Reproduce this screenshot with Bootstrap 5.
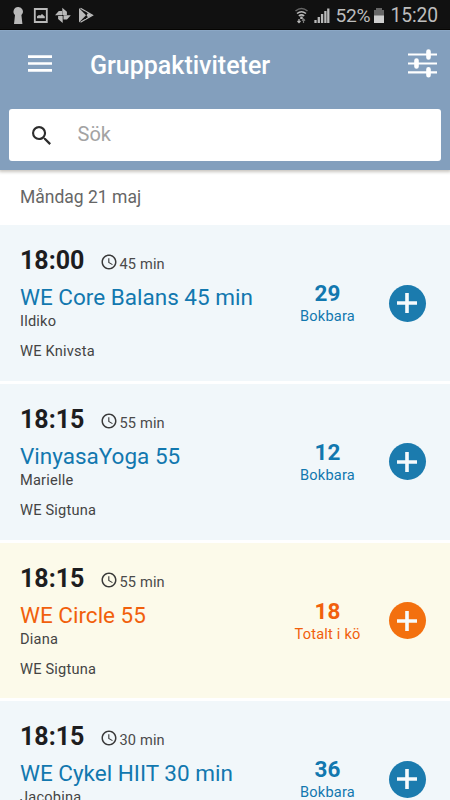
<!DOCTYPE html>
<html lang="sv">
<head>
<meta charset="utf-8">
<meta name="viewport" content="width=device-width, initial-scale=1">
<title>Gruppaktiviteter</title>
<link href="https://cdn.jsdelivr.net/npm/bootstrap@5.3.0/dist/css/bootstrap.min.css" rel="stylesheet">
<style>
html, body { height: 100%; }
body { font-family: Roboto, sans-serif; font-size: 14.6px; line-height: 20px; color: #444; background: #fff; }
svg { display: block; flex: none; }
.screen { width: 100%; height: 800px; }
.statusbar { height: 30px; background: #111; color: #bdbdbd; padding: 3px 12px 0 12px; font-size: 19.3px; border-bottom: 1px solid #000; }
.statusbar .pct { font-size: 19.2px; margin-left: 5px; letter-spacing: -.2px; }
.statusbar .cell { margin-left: 3px; }
.statusbar .clock { margin-left: 5px; letter-spacing: -.1px; }
.statusbar svg { margin-top: -2px; }
.appbar { height: 140px; background: #839fbd; border-top: 1px solid #8ba7c5; box-shadow: 0 1px 3px 1px rgba(60,50,30,.28); z-index: 1; }
.toolbar { height: 78px; padding: 0 13px 8px 28px; }
.toolbar svg { margin-bottom: 6px; }
.toolbar h1 { font-size: 25px; line-height: 30px; margin-left: 38px; letter-spacing: 0; }
.searchbox { height: 52px; margin: 0 9px; padding-left: 23px; border-radius: 3px; }
.searchbox input { font-size: 20px; margin: 0 0 2px 18.5px; color: #333; }
.searchbox input::placeholder { color: #a3a3a3; opacity: 1; }
.day { height: 55px; padding: 17px 20px 0; font-size: 17.5px; color: #666; }
.activity { height: 155.8px; margin-bottom: 3px; padding: 21px 24.5px 0 20px; background: #f1f7fa; --tone: #1278af; --fill: #1b7bae; }
.activity.queue { background: #fcfaea; --tone: #f1600c; --fill: #f3700f; }
.activity .time { font-size: 25px; line-height: 30px; font-weight: 700; color: #1d1d1f; letter-spacing: 0; width: 79.5px; }
.activity .mins { padding-top: 8px; margin-left: 2px; color: #4a4a4a; letter-spacing: .15px; }
.activity .clockface { margin-top: 7px; }
.activity h2 { font-size: 22.5px; line-height: 29px; font-weight: 400; color: var(--tone); margin: 7px 0 -1px; }
.activity .person, .activity .place { letter-spacing: .2px; }
.activity .place { margin-top: 10px; }
.activity .spots { width: 90px; padding-top: 33px; color: var(--tone); margin-right: 16px; letter-spacing: .2px; }
.activity .count { font-size: 22.5px; line-height: 28px; font-weight: 700; letter-spacing: 0; margin-bottom: -1px; }
.activity .add { width: 37px; height: 37px; margin-top: 38.6px; background: var(--fill); }
</style>
<script src="https://cdn.jsdelivr.net/npm/bootstrap@5.3.0/dist/js/bootstrap.bundle.min.js"></script>
</head>
<body>
<svg width="0" height="0" class="position-absolute">
  <symbol id="clock" viewBox="0 0 24 24"><path d="M11.99 2C6.47 2 2 6.48 2 12s4.47 10 9.99 10C17.52 22 22 17.52 22 12S17.52 2 11.99 2zM12 20c-4.42 0-8-3.58-8-8s3.58-8 8-8 8 3.58 8 8-3.58 8-8 8zm.5-13H11v6l5.25 3.15.75-1.23-4.5-2.67z" fill="#3a3a3a"/></symbol>
  <symbol id="plus" viewBox="0 0 20 20"><path d="M10 0v20M0 10h20" stroke="#f6fafc" stroke-width="3.6"/></symbol>
</svg>
<div class="screen overflow-hidden d-flex flex-column">
  <div class="statusbar d-flex align-items-center justify-content-between flex-shrink-0">
    <div class="d-flex align-items-center">
      <svg width="84" height="30" viewBox="12 0 84 30" fill="#b9b9b9">
        <path d="M18 7a4.6 4.6 0 0 0-3 8l-1 9h8.4l-1-9A4.6 4.6 0 0 0 18 7z"/>
        <path d="M34.8 9h12v13h-12z" fill="none" stroke="#b9b9b9" stroke-width="1.8"/>
        <path d="M37 18.300v-2l2-1.300 1.300.5 1.700-1.500 2.800 2.500v1.800z"/>
        <path d="M62.300 15V7.800l4.600 4V15zM63.500 15.300h7.300l-3.800 4.200h-3.500zM62.700 16v7l-4.600-4v-3zM62 15.200h-7l3.800-4.200H62z"/>
        <path d="M79 8v14.500l7-7.200z"/><path d="M80.500 8.200l12 7-12 7" fill="none" stroke="#b9b9b9" stroke-width="1.3"/><path d="M85 11.500l3.500 3.800-3.500 3.700" fill="none" stroke="#111" stroke-width="1"/><path d="M88 13l4.500 2.200L88 17.500l-1.500-2.200z"/>
      </svg>
    </div>
    <div class="d-flex align-items-center">
      <svg width="36" height="30" viewBox="295 0 36 30" fill="none" stroke="#b9b9b9">
        <path d="M296.500 11q6-5 12 0" stroke="#666" stroke-width="1.6"/><path d="M298 13.500q4.500-3.600 9 0M299.800 16q2.700-2.200 5.400 0" stroke-width="1.6"/>
        <path d="M302.500 16.500v2.500" stroke-width="2.5"/><path d="M300 19v3.500m-1.500-1.500l1.500 1.700 1.500-1.700" stroke-width="1.2"/><path d="M304.500 23v-4m-1.500 1.700l1.500-1.700 1.500 1.700" stroke="#777" stroke-width="1.2"/>
        <path d="M316.500 23v-3M319.800 23v-6M323.100 23v-9M326.400 23V11M329.300 23V8.500" stroke-width="2.3"/>
      </svg>
      <span class="pct">52%</span>
      <svg width="12" height="30" viewBox="0 0 12 30" class="cell"><path d="M3 8h6v2h2v6H1v-6h2z" fill="#666"/><path d="M1 15.500h10V23H1z" fill="#cecece"/></svg>
      <span class="clock">15:20</span>
    </div>
  </div>

  <header class="appbar position-relative flex-shrink-0">
    <div class="toolbar d-flex align-items-center text-white">
      <svg width="24" height="17" viewBox="0 0 24 17" stroke="#fff" stroke-width="2.7"><path d="M0 1.700h24M0 8.500h24M0 15.300h24"/></svg>
      <h1 class="mb-0 fw-medium">Gruppaktiviteter</h1>
      <svg class="ms-auto" width="29" height="29" viewBox="0 0 29 29" fill="none" stroke="#fff"><path d="M0 5.500h29M0 14.500h29M0 23.300h29" stroke-width="2.2"/><path d="M20.500 2.500v6M8.500 11.500v6M20.500 20.300v6" stroke-width="4.6" stroke-linecap="round"/></svg>
    </div>
    <div class="searchbox bg-white d-flex align-items-center">
      <svg width="19" height="19" viewBox="3 3 17.5 17.5" fill="#2d2d2d"><path d="M15.500 14h-.79l-.28-.27A6.471 6.471 0 0 0 16 9.500 6.500 6.500 0 1 0 9.500 16c1.610 0 3.090-.59 4.230-1.570l.27.28v.79l5 4.990L20.490 19l-4.990-5zm-6 0C7.010 14 5 11.990 5 9.500S7.010 5 9.500 5 14 7.010 14 9.500 11.990 14 9.500 14z"/></svg>
      <input type="text" class="form-control border-0 shadow-none bg-transparent px-2 py-0" placeholder="Sök" aria-label="Sök">
    </div>
  </header>

  <main>
    <div class="day">Måndag 21 maj</div>

    <article class="activity d-flex">
      <div class="flex-grow-1">
        <div class="d-flex"><span class="time">18:00</span><svg class="clockface" width="18" height="18"><use href="#clock"/></svg><span class="mins">45 min</span></div>
        <h2>WE Core Balans 45 min</h2>
        <div class="person">Ildiko</div>
        <div class="place">WE Knivsta</div>
      </div>
      <div class="spots text-center"><div class="count">29</div><div>Bokbara</div></div>
      <button class="add btn rounded-circle border-0 p-0 d-flex align-items-center justify-content-center" aria-label="Boka"><svg width="20" height="20"><use href="#plus"/></svg></button>
    </article>

    <article class="activity d-flex">
      <div class="flex-grow-1">
        <div class="d-flex"><span class="time">18:15</span><svg class="clockface" width="18" height="18"><use href="#clock"/></svg><span class="mins">55 min</span></div>
        <h2>VinyasaYoga 55</h2>
        <div class="person">Marielle</div>
        <div class="place">WE Sigtuna</div>
      </div>
      <div class="spots text-center"><div class="count">12</div><div>Bokbara</div></div>
      <button class="add btn rounded-circle border-0 p-0 d-flex align-items-center justify-content-center" aria-label="Boka"><svg width="20" height="20"><use href="#plus"/></svg></button>
    </article>

    <article class="activity queue d-flex">
      <div class="flex-grow-1">
        <div class="d-flex"><span class="time">18:15</span><svg class="clockface" width="18" height="18"><use href="#clock"/></svg><span class="mins">55 min</span></div>
        <h2>WE Circle 55</h2>
        <div class="person">Diana</div>
        <div class="place">WE Sigtuna</div>
      </div>
      <div class="spots text-center"><div class="count">18</div><div>Totalt i kö</div></div>
      <button class="add btn rounded-circle border-0 p-0 d-flex align-items-center justify-content-center" aria-label="Ställ i kö"><svg width="20" height="20"><use href="#plus"/></svg></button>
    </article>

    <article class="activity d-flex">
      <div class="flex-grow-1">
        <div class="d-flex"><span class="time">18:15</span><svg class="clockface" width="18" height="18"><use href="#clock"/></svg><span class="mins">30 min</span></div>
        <h2>WE Cykel HIIT 30 min</h2>
        <div class="person">Jacobina</div>
      </div>
      <div class="spots text-center"><div class="count">36</div><div>Bokbara</div></div>
      <button class="add btn rounded-circle border-0 p-0 d-flex align-items-center justify-content-center" aria-label="Boka"><svg width="20" height="20"><use href="#plus"/></svg></button>
    </article>
  </main>
</div>
</body>
</html>
